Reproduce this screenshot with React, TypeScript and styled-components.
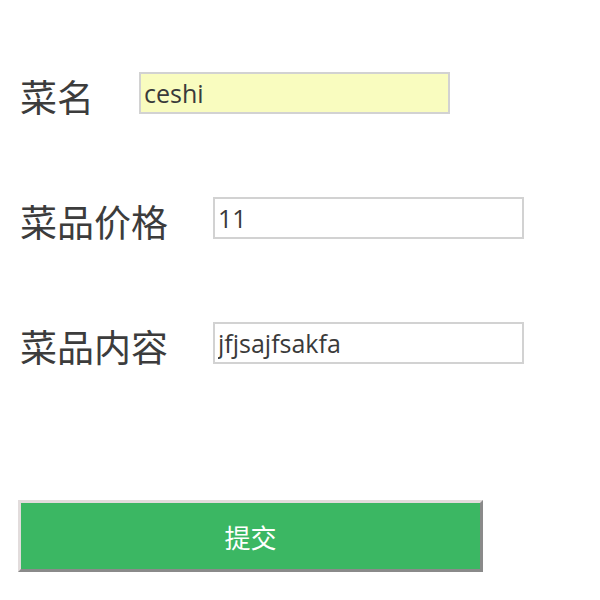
import React from 'react';
import styled, { createGlobalStyle } from 'styled-components';

const GlobalStyle = createGlobalStyle`
  html, body {
    margin: 0;
    padding: 0;
    background: #ffffff;
  }
`;

const Form = styled.form`
  display: flex;
  flex-direction: column;
  align-items: flex-start;
  padding: 72px 0 0 20px;
  width: 600px;
  height: 600px;
  box-sizing: border-box;
`;

const Row = styled.div`
  display: flex;
  align-items: center;
  height: 42px;
  margin-bottom: 83px;

  &:last-of-type {
    margin-bottom: 136px;
  }
`;

const Label = styled.label`
  font-family: "Noto Sans CJK SC", "Noto Sans", sans-serif;
  font-size: 37px;
  color: #3c3c3c;
  margin-right: 45px;
  line-height: 1;
  position: relative;
  top: 3px;
  white-space: nowrap;
`;

const Input = styled.input<{ $filled?: boolean }>`
  box-sizing: border-box;
  width: 311px;
  height: 42px;
  margin: 0;
  padding: 0 3px;
  border: 2px solid #d2d2d2;
  background: ${({ $filled }) => ($filled ? '#f9fcbf' : '#ffffff')};
  font-family: "Open Sans", "Noto Sans", sans-serif;
  font-size: 25px;
  color: #3a3a3a;
  outline: none;
`;

const SubmitButton = styled.button`
  box-sizing: border-box;
  width: 465px;
  height: 72px;
  margin-left: -2px;
  background: #3bb763;
  border: 3px solid;
  border-color: #e2dcdc #8a8a8a #8a8a8a #e2dcdc;
  color: #ffffff;
  font-family: "Noto Sans CJK SC", sans-serif;
  font-size: 26px;
  cursor: pointer;
`;

const fields = [
  { id: 'name', label: '菜名', value: 'ceshi', filled: true },
  { id: 'price', label: '菜品价格', value: '11', filled: false },
  { id: 'content', label: '菜品内容', value: 'jfjsajfsakfa', filled: false },
];

export default function App() {
  return (
    <>
      <GlobalStyle />
      <Form onSubmit={(e) => e.preventDefault()}>
        {fields.map((f) => (
          <Row key={f.id}>
            <Label htmlFor={f.id}>{f.label}</Label>
            <Input id={f.id} defaultValue={f.value} $filled={f.filled} />
          </Row>
        ))}
        <SubmitButton type="submit">提交</SubmitButton>
      </Form>
    </>
  );
}
